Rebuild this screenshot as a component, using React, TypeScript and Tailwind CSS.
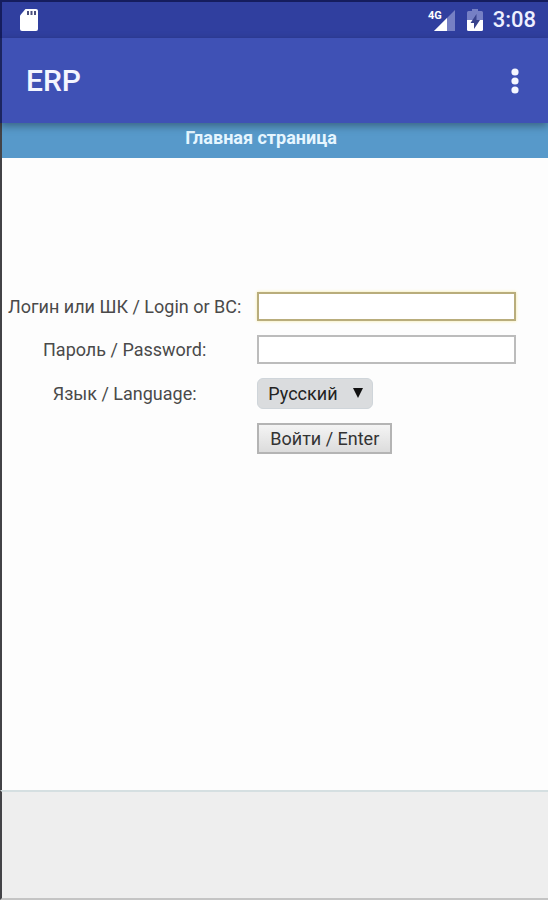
import { ReactNode } from 'react';

function StatusBar() {
    return (
        <div className="flex h-[38px] items-center justify-between border-t-2 border-l-2 border-[#151d5e] bg-[#303f9f] pl-[17px] pr-3">
            <svg viewBox="0 0 20 22" className="h-[22px] w-5" role="img" aria-label="SD card">
                <path d="M6.5 0H17a2 2 0 0 1 2 2v18a2 2 0 0 1-2 2H3a2 2 0 0 1-2-2V6.5z" fill="#fff" />
                <path d="M8 2h2v4H8zM11.500 2h2v4h-2zM15 2h2v4h-2z" fill="#4a4f7c" />
            </svg>

            <div className="flex items-center">
                <svg viewBox="0 0 28 23" className="h-[23px] w-7" role="img" aria-label="4G signal">
                    <path d="M28 1v21H7z" fill="#7680c4" />
                    <path d="M20 9v13H7z" fill="#fff" />
                    <text x="1" y="10" fill="#fff" fontFamily="Roboto, sans-serif" fontSize="11" fontWeight="700">4G</text>
                </svg>
                <svg viewBox="0 0 16 22" className="ml-3 h-[22px] w-4" role="img" aria-label="Battery charging">
                    <path d="M5 0h6v2h3.500a1.500 1.500 0 0 1 1.500 1.500V11H0V3.500A1.500 1.500 0 0 1 1.500 2H5z" fill="#7680c4" />
                    <path d="M0 11h16v9.500a1.500 1.500 0 0 1-1.500 1.500h-13A1.500 1.500 0 0 1 0 20.500z" fill="#fff" />
                    <path d="M9.500 5v6H13l-6 9v-6H3.500z" fill="#39438c" />
                </svg>
                <span className="ml-2.5 text-[22px] leading-6 font-medium text-[#eef0ff]">3:08</span>
            </div>
        </div>
    );
}

function AppBar() {
    return (
        <header className="relative z-10 flex h-[85px] items-center justify-between border-l-2 border-[#1c2560] bg-[#3f51b5] pl-6 pr-[21px] shadow-[0_3px_8px_rgba(0,0,0,0.35)]">
            <h1 className="text-[30px] leading-9 font-medium text-[#f4f6ff]">ERP</h1>
            <button type="button" aria-label="More options" className="flex h-10 w-6 items-center justify-center">
                <svg viewBox="0 0 8 28" className="h-7 w-2" fill="#f4f6ff">
                    <circle cx="4" cy="5" r="3.600" />
                    <circle cx="4" cy="14" r="3.600" />
                    <circle cx="4" cy="23" r="3.600" />
                </svg>
            </button>
        </header>
    );
}

function FieldLabel({ htmlFor, children }: { htmlFor: string; children: ReactNode }) {
    return (
        <label htmlFor={htmlFor} className="text-center text-lg leading-6 text-[#4a4a4a]">
            {children}
        </label>
    );
}

function LoginForm() {
    return (
        <form
            className="grid grid-cols-[auto_1fr] items-center gap-x-4 gap-y-[14px] pl-1.5 pr-8"
            onSubmit={(e) => e.preventDefault()}
        >
            <FieldLabel htmlFor="login">Логин или ШК / Login or BC:</FieldLabel>
            <input
                id="login"
                type="text"
                className="h-[29px] w-full border-2 border-[#b9ad7c] bg-white px-1 text-lg shadow-[0_0_3px_#f5e9a0] outline-none"
            />

            <FieldLabel htmlFor="password">Пароль / Password:</FieldLabel>
            <input
                id="password"
                type="password"
                className="h-[29px] w-full border-2 border-[#bcbcbc] bg-white px-1 text-lg outline-none"
            />

            <FieldLabel htmlFor="language">Язык / Language:</FieldLabel>
            <div className="relative w-[116px]">
                <select
                    id="language"
                    className="block h-[31px] w-full appearance-none rounded-md border border-[#cfd5da] bg-[#dadcde] pl-2.5 text-lg leading-6 text-[#222]"
                >
                    <option>Русский</option>
                    <option>English</option>
                </select>
                <svg viewBox="0 0 10 10" className="pointer-events-none absolute top-[10px] right-[10px] size-2.5" aria-hidden="true">
                    <path d="M0 0h10L5 10z" fill="#111" />
                </svg>
            </div>

            <button
                type="submit"
                className="col-start-2 h-[31px] justify-self-start border-2 border-[#b4b4b4] bg-linear-to-b from-[#f4f4f4] to-[#dcdcdc] px-[11px] text-lg leading-6 text-[#333]"
            >
                Войти / Enter
            </button>
        </form>
    );
}

export default function App() {
    return (
        <div className="flex min-h-screen flex-col bg-[#fdfdfd] font-[Roboto,sans-serif]">
            <StatusBar />
            <AppBar />
            <h2 className="h-[35px] border-l-2 border-[#434347] bg-[#5799ca] pt-[3px] pr-7 text-center text-lg leading-6 font-bold text-[#e6f6ff]">
                Главная страница
            </h2>

            <main className="flex-1 border-l-2 border-[#434347] pt-[134px]">
                <LoginForm />
            </main>

            <footer className="h-[110px] border-y-2 border-l-2 border-t-[#d5dfe1] border-b-[#c4c4c4] border-l-[#434347] bg-[#eeeeee]" />
        </div>
    );
}
